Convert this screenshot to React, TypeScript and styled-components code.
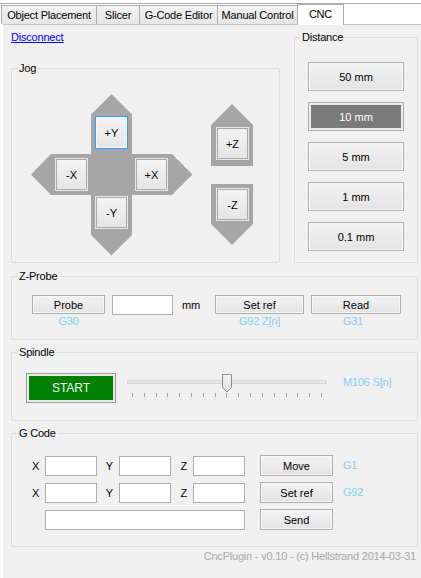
import React from "react";
import styled, { createGlobalStyle } from "styled-components";

const Global = createGlobalStyle`
  html, body { margin: 0; padding: 0; background: #ffffff; }
  body {
    font-family: "Liberation Sans", Arial, sans-serif;
    font-size: 11px;
    letter-spacing: -0.2px;
    color: #000;
  }
  * { box-sizing: border-box; }
`;

const Window = styled.div`
  width: 421px;
  height: 578px;
  overflow: hidden;
  background: #fff;
  display: flex;
  flex-direction: column;
  padding-top: 3px;
`;

const TabStrip = styled.div`
  display: flex;
  align-items: flex-end;
  height: 21px;
  border-top: 1px solid #a9a9a9;
  padding-left: 2px;
  position: relative;
  z-index: 2;
`;

const Tab = styled.div<{ $w: number; $active?: boolean }>`
  width: ${(p) => p.$w}px;
  height: ${(p) => (p.$active ? 21 : 19)}px;
  margin-left: -1px;
  margin-bottom: ${(p) => (p.$active ? -1 : 0)}px;
  padding-bottom: ${(p) => (p.$active ? 3 : 0)}px;
  border: 1px solid #acacac;
  border-bottom: none;
  background: ${(p) => (p.$active ? "#ffffff" : "linear-gradient(#f2f2f2, #e6e6e6)")};
  display: flex;
  align-items: center;
  justify-content: center;
  white-space: nowrap;
  position: relative;
  z-index: ${(p) => (p.$active ? 2 : 1)};
`;

const Page = styled.div`
  flex: 1;
  margin-left: 3px;
  background: #f0f0f0;
  border-top: 1px solid #c4c4c4;
  padding: 6px 3px 0 8px;
  display: flex;
  flex-direction: column;
`;

const TopRow = styled.div`
  display: grid;
  grid-template-columns: 269px 1fr;
  column-gap: 14px;
  height: 232px;
`;

const LeftCol = styled.div`
  display: flex;
  flex-direction: column;
`;

const LinkText = styled.a`
  color: #0000ff;
  text-decoration: underline;
  line-height: 13px;
  align-self: flex-start;
  cursor: pointer;
`;

const GroupBox = styled.fieldset<{ $h?: number; $mt?: number; $grow?: boolean }>`
  margin: ${(p) => p.$mt ?? 0}px 0 0 0;
  padding: 0;
  min-width: 0;
  border: 1px solid #dcdcdc;
  border-radius: 2px;
  ${(p) => (p.$h ? `height: ${p.$h}px;` : "")}
  ${(p) => (p.$grow ? "flex: 1;" : "")}
`;

const Legend = styled.legend`
  margin-left: 5px;
  padding: 0 2px;
  line-height: 13px;
  font-size: 11px;
`;

/* ---------- Jog ---------- */
const JogBody = styled.div`
  padding: 19px 0 0 19px;
`;

const Pad = styled.div`
  position: relative;
  width: 223px;
  height: 163px;
`;

const PadDrawing = styled.svg`
  position: absolute;
  left: 0;
  top: 0;
`;

const JogButton = styled.button<{ $x: number; $y: number; $focus?: boolean }>`
  position: absolute;
  left: ${(p) => p.$x}px;
  top: ${(p) => p.$y}px;
  width: 33px;
  height: 33px;
  margin: 0;
  padding: 0;
  font: inherit;
  color: #000;
  border: 1px solid ${(p) => (p.$focus ? "#3399ff" : "#e8e8e8")};
  box-shadow: inset 0 0 0 1px ${(p) => (p.$focus ? "#f4f4f4" : "#a9a9a9")};
  background: linear-gradient(#f3f3f3, #e5e5e5);
  display: flex;
  align-items: center;
  justify-content: center;
`;

/* ---------- Distance ---------- */
const DistanceBody = styled.div`
  padding-top: 18px;
  display: flex;
  flex-direction: column;
  align-items: center;
  gap: 11px;
`;

const DistButton = styled.button<{ $sel?: boolean }>`
  width: 96px;
  height: 29px;
  margin: 0;
  padding: 0;
  font: inherit;
  color: ${(p) => (p.$sel ? "#ffffff" : "#000")};
  border: 1px solid #adadad;
  background: ${(p) => (p.$sel ? "#7a7a7a" : "linear-gradient(#f2f2f2, #e4e4e4)")};
  box-shadow: ${(p) => (p.$sel ? "inset 0 0 0 2px #ececec" : "inset 0 0 0 1px #f8f8f8")};
`;

/* ---------- common controls ---------- */
const Button = styled.button<{ $w: number; $h?: number }>`
  width: ${(p) => p.$w}px;
  height: ${(p) => p.$h ?? 19}px;
  margin: 0;
  padding: 0;
  font: inherit;
  color: #000;
  border: 1px solid #adadad;
  background: linear-gradient(#f2f2f2, #e3e3e3);
  box-shadow: inset 0 0 0 1px #f7f7f7;
  justify-self: start;
`;

const TextBox = styled.input<{ $w: number }>`
  width: ${(p) => p.$w}px;
  height: 20px;
  margin: 0;
  padding: 0 2px;
  font: inherit;
  background: #fff;
  border: 1px solid #abadb3;
  outline: none;
`;

const Hint = styled.span<{ $pl?: number; $center?: boolean; $w?: number }>`
  color: #87cefa;
  line-height: 13px;
  white-space: nowrap;
  padding-left: ${(p) => p.$pl ?? 0}px;
  ${(p) => (p.$w ? `width: ${p.$w}px;` : "")}
  text-align: ${(p) => (p.$center ? "center" : "left")};
`;

/* ---------- Z-Probe ---------- */
const ProbeGrid = styled.div`
  padding: 11px 0 0 20px;
  display: grid;
  grid-template-columns: 80px 61px 42px 96px 90px;
  grid-template-rows: 21px 13px;
  align-items: center;
`;

const Unit = styled.span`
  padding-left: 9px;
`;

/* ---------- Spindle ---------- */
const SpindleRow = styled.div`
  padding: 14px 0 0 14px;
  display: flex;
  align-items: flex-start;
`;

const StartButton = styled.button`
  width: 90px;
  height: 30px;
  margin: 0;
  padding: 0;
  font: inherit;
  font-size: 12px;
  color: #f2fff2;
  border: 1px solid #9c9c9c;
  background: #008000;
  box-shadow: inset 0 0 0 2px #e9e9e9;
`;

const SliderSvg = styled.svg`
  margin-left: 11px;
  flex: none;
`;

const SpindleHint = styled(Hint)`
  margin-left: 16px;
  margin-top: 3px;
`;

/* ---------- G Code ---------- */
const GGrid = styled.div`
  padding: 15px 0 0 20px;
  display: grid;
  grid-template-columns: 13px 52px 22px 52px 22px 52px 15px 73px 10px auto;
  grid-template-rows: 21px 21px 21px;
  row-gap: 6px;
  align-items: center;
`;

const AxisLabel = styled.span`
  text-align: right;
  padding-right: 6px;
`;

const Wide = styled.div`
  grid-column: 2 / 7;
  display: flex;
`;

const Footer = styled.div`
  margin-top: 3px;
  padding-right: 2px;
  text-align: right;
  color: #a9a9a9;
  line-height: 13px;
`;

const tabs: { label: string; w: number; active?: boolean }[] = [
  { label: "Object Placement", w: 96 },
  { label: "Slicer", w: 44 },
  { label: "G-Code Editor", w: 79 },
  { label: "Manual Control", w: 81 },
  { label: "CNC", w: 47, active: true },
];

const distances = [
  { label: "50 mm" },
  { label: "10 mm", sel: true },
  { label: "5 mm" },
  { label: "1 mm" },
  { label: "0.1 mm" },
];

const ticks = Array.from({ length: 17 }, (_, i) => 5 + i * 11.81);

export default function App() {
  return (
    <>
      <Global />
      <Window>
        <TabStrip>
          {tabs.map((t) => (
            <Tab key={t.label} $w={t.w} $active={t.active}>
              {t.label}
            </Tab>
          ))}
        </TabStrip>
        <Page>
          <TopRow>
            <LeftCol>
              <LinkText>Disconnect</LinkText>
              <GroupBox $mt={18} $grow>
                <Legend>Jog</Legend>
                <JogBody>
                  <Pad>
                    <PadDrawing width="223" height="163" viewBox="0 0 223 163">
                      <polygon
                        points="80.5,0 101,20.5 101,60 141,60 161.5,80.5 141,101 101,101 101,141 80.5,161.5 60,141 60,101 20,101 0,80.5 20,60 60,60 60,20.5"
                        fill="#a6a6a6"
                      />
                      <polygon points="201,10 222,31 222,72 180,72 180,31" fill="#a6a6a6" />
                      <polygon points="180,90 222,90 222,130 201,151 180,130" fill="#a6a6a6" />
                    </PadDrawing>
                    <JogButton $x={64} $y={22} $focus>+Y</JogButton>
                    <JogButton $x={24} $y={64}>-X</JogButton>
                    <JogButton $x={104} $y={64}>+X</JogButton>
                    <JogButton $x={64} $y={102}>-Y</JogButton>
                    <JogButton $x={185} $y={33}>+Z</JogButton>
                    <JogButton $x={185} $y={94}>-Z</JogButton>
                  </Pad>
                </JogBody>
              </GroupBox>
            </LeftCol>
            <GroupBox>
              <Legend>Distance</Legend>
              <DistanceBody>
                {distances.map((d) => (
                  <DistButton key={d.label} $sel={d.sel}>
                    {d.label}
                  </DistButton>
                ))}
              </DistanceBody>
            </GroupBox>
          </TopRow>

          <GroupBox $h={70} $mt={7}>
            <Legend>Z-Probe</Legend>
            <ProbeGrid>
              <Button $w={73}>Probe</Button>
              <TextBox $w={61} defaultValue="" />
              <Unit>mm</Unit>
              <Button $w={89}>Set ref</Button>
              <Button $w={90}>Read</Button>
              <Hint $center $w={73}>G30</Hint>
              <span />
              <span />
              <Hint $center $w={89}>G92 Z[n]</Hint>
              <Hint $pl={32}>G31</Hint>
            </ProbeGrid>
          </GroupBox>

          <GroupBox $h={75} $mt={6}>
            <Legend>Spindle</Legend>
            <SpindleRow>
              <StartButton>START</StartButton>
              <SliderSvg width="200" height="25" viewBox="0 0 200 25">
                <defs>
                  <linearGradient id="thumb" x1="0" y1="0" x2="0" y2="1">
                    <stop offset="0" stopColor="#f6f6f6" />
                    <stop offset="1" stopColor="#dcdcdc" />
                  </linearGradient>
                </defs>
                <rect x="0.5" y="7.5" width="199" height="3" fill="#e7eaea" stroke="#d6d6d6" />
                {ticks.map((x, i) => (
                  <line
                    key={i}
                    x1={Math.round(x) + 0.5}
                    x2={Math.round(x) + 0.5}
                    y1={20}
                    y2={i === 8 ? 25 : 24}
                    stroke="#a0a0a0"
                    strokeWidth="1"
                  />
                ))}
                <path
                  d="M95.5 1.5 H104.5 V14.5 L100 19 L95.5 14.5 Z"
                  fill="url(#thumb)"
                  stroke="#8d8d8d"
                  strokeWidth="1"
                />
              </SliderSvg>
              <SpindleHint>M106 S[n]</SpindleHint>
            </SpindleRow>
          </GroupBox>

          <GroupBox $h={120} $mt={6}>
            <Legend>G Code</Legend>
            <GGrid>
              <AxisLabel>X</AxisLabel>
              <TextBox $w={52} defaultValue="" />
              <AxisLabel>Y</AxisLabel>
              <TextBox $w={52} defaultValue="" />
              <AxisLabel>Z</AxisLabel>
              <TextBox $w={52} defaultValue="" />
              <span />
              <Button $w={73} $h={21}>Move</Button>
              <span />
              <Hint>G1</Hint>

              <AxisLabel>X</AxisLabel>
              <TextBox $w={52} defaultValue="" />
              <AxisLabel>Y</AxisLabel>
              <TextBox $w={52} defaultValue="" />
              <AxisLabel>Z</AxisLabel>
              <TextBox $w={52} defaultValue="" />
              <span />
              <Button $w={73} $h={21}>Set ref</Button>
              <span />
              <Hint>G92</Hint>

              <span />
              <Wide>
                <TextBox $w={200} defaultValue="" />
              </Wide>
              <span />
              <Button $w={73} $h={21}>Send</Button>
            </GGrid>
          </GroupBox>

          <Footer>CncPlugin - v0.10 - (c) Hellstrand 2014-03-31</Footer>
        </Page>
      </Window>
    </>
  );
}
